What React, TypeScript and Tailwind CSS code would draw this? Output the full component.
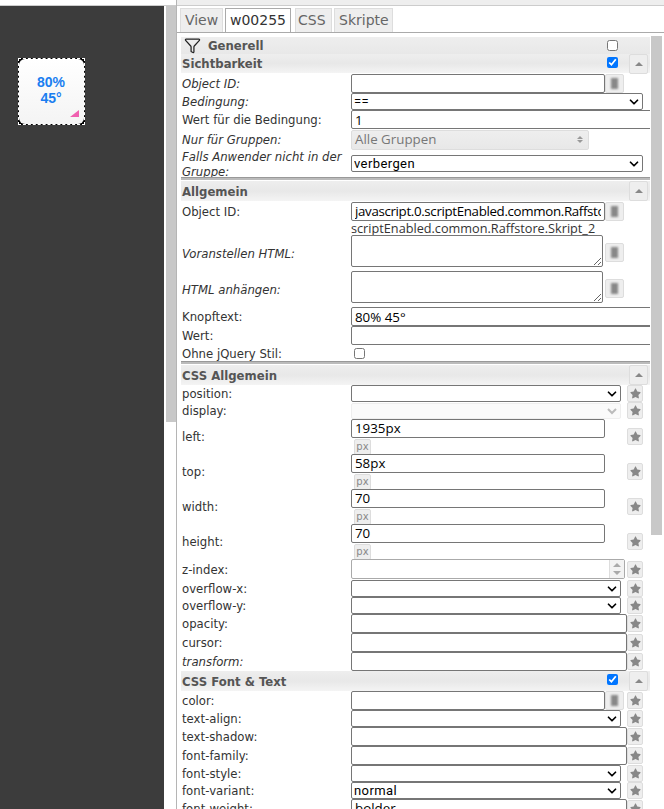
import type { ReactNode } from 'react';
import { ChevronDown, Filter } from 'lucide-react';
import { FaStar } from 'react-icons/fa';

const inputBase = 'h-[19px] shrink-0 border border-[#767676] rounded-[2px] bg-white px-[3px] pt-[2px] text-[13.33px] text-black font-["Open_Sans",sans-serif] outline-none';

function Star() {
  return (
    <span className="flex h-[17px] w-[16px] shrink-0 items-center justify-center rounded-[2px] border border-[#ddd] bg-[#eee] text-[#888]">
      <FaStar size={11} />
    </span>
  );
}

function NoteBtn({ className = '' }: { className?: string }) {
  return (
    <span className={`flex h-[19px] w-[19px] shrink-0 items-center justify-center rounded-[2px] border border-[#ddd] bg-[#eee] ${className}`}>
      <span className="h-[11px] w-[7px] bg-[#888] blur-[1px]" />
    </span>
  );
}

function Collapse() {
  return (
    <span className="flex h-[20px] w-[19px] shrink-0 items-center justify-center rounded-[2px] border border-[#ddd] bg-[#eee]">
      <span className="h-0 w-0 border-x-[4px] border-b-[4px] border-x-transparent border-b-[#888]" />
    </span>
  );
}

function Section({ title, h, check, pt = 'pt-[4px]' }: { title: string; h: string; check?: boolean; pt?: string }) {
  return (
    <div className={`relative flex ${h} shrink-0 items-center bg-gradient-to-b from-[#eeeeee] via-[#e8e8e8] to-[#f4f4f4] pl-[1px]`}>
      <span className={`${pt} text-[11.7px] font-bold text-[#555]`}>{title}</span>
      {check && <input type="checkbox" defaultChecked className="absolute left-[426px] top-[3px] h-[11px] w-[11px]" />}
      <span className="ml-auto mr-[2px]"><Collapse /></span>
    </div>
  );
}

function Row({ label, h, italic, children }: { label: ReactNode; h: string; italic?: boolean; children?: ReactNode }) {
  return (
    <div className={`flex ${h} shrink-0 items-center`}>
      <div className={`w-[170px] shrink-0 pl-[1px] pt-[2px] text-[11.7px] leading-[15px] text-[#333] ${italic ? 'italic' : ''}`}>{label}</div>
      <div className="flex w-[292px] shrink-0 items-center justify-between">{children}</div>
    </div>
  );
}

function Sep() {
  return (
    <div className="h-[4px] shrink-0 pb-[1px]">
      <div className="h-[3px] border-t border-[#999] bg-[#bbb]" />
    </div>
  );
}

function Sel({ value = '', w = 'w-[270px]' }: { value?: string; w?: string }) {
  return (
    <div className={`relative h-[17px] shrink-0 ${w}`}>
      <select defaultValue={value} className='block h-[17px] w-full appearance-none rounded-[2px] border border-[#767676] bg-white pl-[2px] text-[13px] leading-[15px] tracking-[0.4px] text-black font-["Roboto",sans-serif]'>
        <option value={value}>{value}</option>
      </select>
      <ChevronDown size={14} strokeWidth={3} className="pointer-events-none absolute right-[2px] top-[2px] text-black" />
    </div>
  );
}

function SizeRow({ label, value }: { label: string; value: string }) {
  return (
    <Row label={label} h="h-[35px]">
      <div className="flex w-[254px] shrink-0 flex-col">
        <input readOnly value={value} className={`${inputBase} w-[254px]`} />
        <span className="ml-[3px] mt-[1px] flex h-[16px] w-[17px] items-center justify-center rounded-[2px] border border-[#ddd] bg-[#eee] text-[10px] text-[#888]">px</span>
      </div>
      <Star />
    </Row>
  );
}

export default function App() {
  return (
    <div className='relative flex h-[809px] w-[664px] flex-col overflow-hidden bg-white font-["DejaVu_Sans",sans-serif]'>
      <div className="flex min-h-0 flex-1">
        {/* canvas */}
        <div className="mt-[5px] w-[164px] shrink-0 border-t border-[#ccc] bg-[#3c3c3c] pl-[18px] pt-[52px]">
          <div className="h-[67px] w-[67px] border border-dashed border-white bg-black">
            <div className='relative flex h-[65px] w-[65px] flex-col items-center justify-center rounded-[6px] bg-gradient-to-b from-white to-[#f4f4f4] pb-[4px] pr-[1px] text-[14px] font-bold leading-[16px] text-[#1a7ef0] font-["Liberation_Sans",sans-serif]'>
              <span>80%</span>
              <span>45°</span>
              <span className="absolute bottom-[7px] right-[5px] h-0 w-0 border-b-[7px] border-l-[9px] border-b-[#f060b0] border-l-transparent" />
            </div>
          </div>
        </div>

        {/* canvas scrollbar */}
        <div className="mt-[5px] flex w-[12px] shrink-0 flex-col border-t border-[#ccc] pl-[2px]">
          <div className="h-[416px] bg-[#c8c8c8]" />
        </div>

        {/* attribute panel */}
        <div className="flex min-w-0 flex-1 flex-col border-l border-[#b5b5b5]">
          <div className="h-[5px] shrink-0 bg-[#eee]" />
          <div className="h-px shrink-0 bg-[#ccc]" />
          <div className="flex h-[27px] shrink-0 items-end gap-[2px] border-b border-[#aaa] pl-[3px] text-[14px] text-[#666]">
            <span className="flex h-[24px] w-[43px] items-center justify-center border border-b-0 border-[#ddd] bg-[#eee]">View</span>
            <span className="flex h-[24px] w-[66px] items-center justify-center border border-b-0 border-[#aaa] bg-white text-[#333]">w00255</span>
            <span className="ml-[2px] flex h-[24px] w-[37px] items-center border border-b-0 border-[#ddd] bg-[#eee] pl-[2px]">CSS</span>
            <span className="flex h-[24px] w-[59px] items-center border border-b-0 border-[#ddd] bg-[#eee] pl-[4px]">Skripte</span>
          </div>

          <div className="flex min-h-0 flex-1 pt-[3px]">
            <div className="ml-[4px] flex w-[469px] shrink-0 flex-col overflow-hidden pt-px">
              <div className="flex h-[17px] shrink-0 items-center bg-gradient-to-b from-[#eeeeee] to-[#e8e8e8] pl-[3px]">
                <Filter size={17} strokeWidth={1.75} className="text-[#222]" />
                <span className="ml-[7px] pt-[2px] text-[11.7px] font-bold text-[#555]">Generell</span>
                <input type="checkbox" className="ml-[344px] h-[11px] w-[11px]" />
              </div>
              <Section title="Sichtbarkeit" h="h-[19px]" check pt="pt-[2px]" />
              <Row label="Object ID:" h="h-[20px]" italic>
                <div className="flex">
                  <input readOnly value="" className={`${inputBase} w-[254px]`} />
                  <NoteBtn />
                </div>
              </Row>
              <Row label="Bedingung:" h="h-[17px]" italic><Sel value="==" w="w-[292px]" /></Row>
              <Row label="Wert für die Bedingung:" h="h-[19px]">
                <input readOnly value="1" className={`${inputBase} w-[310px]`} />
              </Row>
              <Row label="Nur für Gruppen:" h="h-[21px]" italic>
                <div className='flex h-[20px] w-[238px] items-center justify-between rounded-[2px] border border-[#ddd] bg-gradient-to-b from-[#eee] to-[#e8e8e8] px-[3px] text-[13.33px] text-[#777] font-["Open_Sans",sans-serif]'>
                  <span>Alle Gruppen</span>
                  <span className="mr-[2px] flex flex-col gap-[1px]">
                    <span className="h-0 w-0 border-x-[3px] border-b-[3px] border-x-transparent border-b-[#999]" />
                    <span className="h-0 w-0 border-x-[3px] border-t-[3px] border-x-transparent border-t-[#999]" />
                  </span>
                </div>
              </Row>
              <Row label="Falls Anwender nicht in der Gruppe:" h="h-[27px]" italic><Sel value="verbergen" w="w-[292px]" /></Row>
              <Sep />

              <Section title="Allgemein" h="h-[20px]" />
              <Row label="Object ID:" h="h-[20px]">
                <div className="flex">
                  <input readOnly value="javascript.0.scriptEnabled.common.Raffstore.Skript_2" className={`${inputBase} w-[254px] text-[12.45px] tracking-[-0.35px]`} />
                  <NoteBtn />
                </div>
              </Row>
              <div className='h-[14px] shrink-0 overflow-visible whitespace-nowrap pl-[170px] text-[12.7px] leading-[14px] text-[#333] font-["Open_Sans",sans-serif]'>scriptEnabled.common.Raffstore.Skript_2</div>
              <Row label="Voranstellen HTML:" h="h-[36px]" italic>
                <div className="flex h-[36px] items-start">
                  <textarea readOnly className="h-[32px] w-[252px] rounded-[2px] border border-[#767676] bg-white" />
                  <NoteBtn className="ml-[2px] mt-[8px]" />
                </div>
              </Row>
              <Row label="HTML anhängen:" h="h-[36px]" italic>
                <div className="flex h-[36px] items-start">
                  <textarea readOnly className="h-[32px] w-[252px] rounded-[2px] border border-[#767676] bg-white" />
                  <NoteBtn className="ml-[2px] mt-[8px]" />
                </div>
              </Row>
              <Row label="Knopftext:" h="h-[19px]"><input readOnly value="80% 45°" className={`${inputBase} w-[310px]`} /></Row>
              <Row label="Wert:" h="h-[19px]"><input readOnly value="" className={`${inputBase} w-[310px]`} /></Row>
              <Row label="Ohne jQuery Stil:" h="h-[16px]"><input type="checkbox" className="ml-[3px] h-[11px] w-[11px]" /></Row>
              <Sep />

              <Section title="CSS Allgemein" h="h-[20px]" />
              <Row label="position:" h="h-[17px]"><Sel /><Star /></Row>
              <Row label="display:" h="h-[17px]">
                <select disabled className="h-[16px] w-[270px] shrink-0 rounded-[2px] border border-[#eee] bg-[#fafafa] text-[#bbb]"><option></option></select>
                <Star />
              </Row>
              <SizeRow label="left:" value="1935px" />
              <SizeRow label="top:" value="58px" />
              <SizeRow label="width:" value="70" />
              <SizeRow label="height:" value="70" />
              <Row label="z-index:" h="h-[20px]">
                <div className="flex h-[20px] w-[274px] shrink-0 items-center justify-end rounded-[2px] border border-[#aaa] bg-white">
                  <span className="flex h-full w-[15px] flex-col items-center justify-center gap-[4px] border-l border-[#ddd] bg-[#f3f3f3]">
                    <span className="h-0 w-0 border-x-[4px] border-b-[4px] border-x-transparent border-b-[#aaa]" />
                    <span className="h-0 w-0 border-x-[4px] border-t-[4px] border-x-transparent border-t-[#aaa]" />
                  </span>
                </div>
                <Star />
              </Row>
              <Row label="overflow-x:" h="h-[18px]"><Sel /><Star /></Row>
              <Row label="overflow-y:" h="h-[16px]"><Sel /><Star /></Row>
              <Row label="opacity:" h="h-[20px]"><input readOnly value="" className={`${inputBase} w-[276px]`} /><Star /></Row>
              <Row label="cursor:" h="h-[19px]"><input readOnly value="" className={`${inputBase} w-[276px]`} /><Star /></Row>
              <Row label="transform:" h="h-[19px]" italic><input readOnly value="" className={`${inputBase} w-[276px]`} /><Star /></Row>

              <Section title="CSS Font & Text" h="h-[20px]" check />
              <Row label="color:" h="h-[19px]">
                <div className="flex">
                  <input readOnly value="" className={`${inputBase} w-[254px]`} />
                  <NoteBtn />
                </div>
                <Star />
              </Row>
              <Row label="text-align:" h="h-[17px]"><Sel /><Star /></Row>
              <Row label="text-shadow:" h="h-[19px]"><input readOnly value="" className={`${inputBase} w-[276px]`} /><Star /></Row>
              <Row label="font-family:" h="h-[19px]"><input readOnly value="" className={`${inputBase} w-[276px]`} /><Star /></Row>
              <Row label="font-style:" h="h-[17px]"><Sel /><Star /></Row>
              <Row label="font-variant:" h="h-[17px]"><Sel value="normal" /><Star /></Row>
              <Row label="font-weight:" h="h-[18px]"><input readOnly value="bolder" className={`${inputBase} w-[276px]`} /><Star /></Row>
            </div>

            {/* panel scrollbar */}
            <div className="ml-px h-[499px] w-[11px] shrink-0 bg-[#c8c8c8]" />
          </div>
        </div>
      </div>
    </div>
  );
}
